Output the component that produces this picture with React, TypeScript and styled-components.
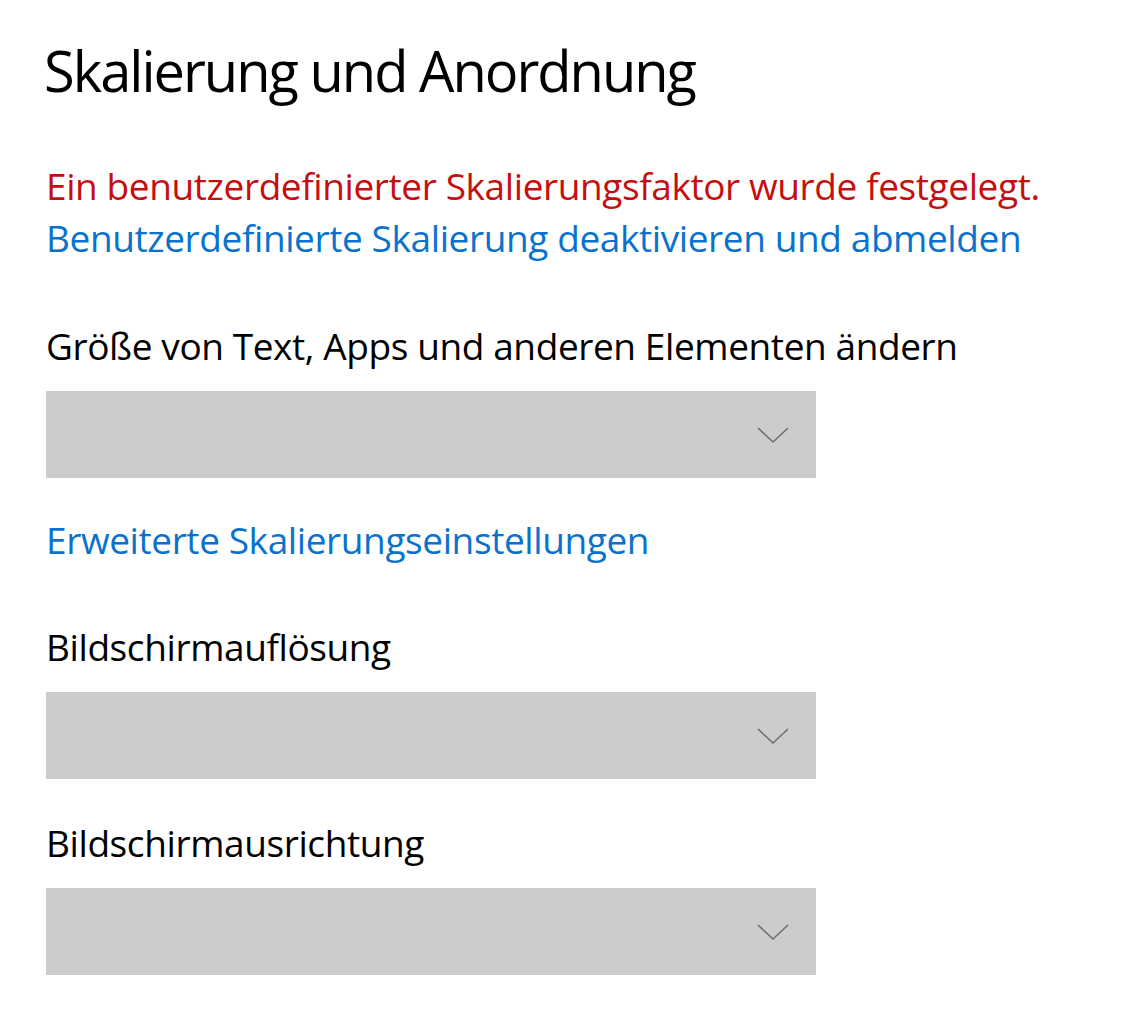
import React from "react";
import styled, { createGlobalStyle } from "styled-components";

const Global = createGlobalStyle`
  html, body { margin: 0; padding: 0; background: #ffffff; }
  body { font-family: "Open Sans", "Noto Sans", sans-serif; }
`;

const Page = styled.div`
  display: flex;
  flex-direction: column;
  padding: 30px 0 0 44px;
  width: 1123px;
  height: 1018px;
  box-sizing: border-box;
`;

const Title = styled.h1`
  margin: 0;
  font-size: 56px;
  font-weight: 400;
  line-height: 80px;
  color: #000;
  letter-spacing: -2px;
`;

const Text = styled.div<{ $color?: string }>`
  font-size: 37px;
  line-height: 52px;
  color: ${(p) => p.$color || "#000"};
  letter-spacing: -0.4px;
  padding-left: 2px;
  white-space: nowrap;
`;

const Notice = styled.div`
  display: flex;
  flex-direction: column;
  margin-top: 50px;
`;

const Field = styled.div<{ $top: number }>`
  display: flex;
  flex-direction: column;
  margin-top: ${(p) => p.$top}px;
  gap: 19px;
`;

const Select = styled.div`
  width: 770px;
  height: 87px;
  margin-left: 2px;
  background: #cccccc;
  display: flex;
  align-items: center;
  justify-content: flex-end;
  padding-right: 26px;
  box-sizing: border-box;
`;

const Chevron = () => (
  <svg width="34" height="20" viewBox="0 0 34 20">
    <path d="M2 3 L17 17 L32 3" fill="none" stroke="#6e6e6e" strokeWidth="1.6" />
  </svg>
);

export default function App() {
  return (
    <>
      <Global />
      <Page>
        <Title>Skalierung und Anordnung</Title>
        <Notice>
          <Text $color="#c50f0f">Ein benutzerdefinierter Skalierungsfaktor wurde festgelegt.</Text>
          <Text $color="#0a72cc">Benutzerdefinierte Skalierung deaktivieren und abmelden</Text>
        </Notice>
        <Field $top={56}>
          <Text>Größe von Text, Apps und anderen Elementen ändern</Text>
          <Select><Chevron /></Select>
        </Field>
        <Field $top={36}>
          <Text $color="#0a72cc">Erweiterte Skalierungseinstellungen</Text>
        </Field>
        <Field $top={55}>
          <Text>Bildschirmauflösung</Text>
          <Select><Chevron /></Select>
        </Field>
        <Field $top={38}>
          <Text>Bildschirmausrichtung</Text>
          <Select><Chevron /></Select>
        </Field>
      </Page>
    </>
  );
}
